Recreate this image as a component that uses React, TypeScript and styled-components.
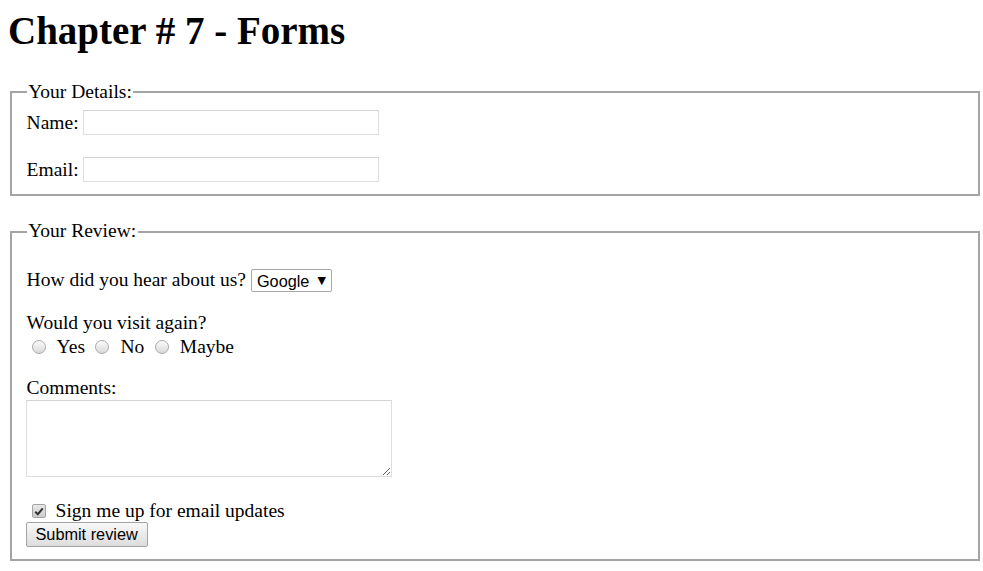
import React from "react";
import styled, { createGlobalStyle } from "styled-components";

const GlobalStyle = createGlobalStyle`
  html, body { margin: 0; padding: 0; background: #ffffff; }
  body {
    font-family: "Liberation Serif", "Times New Roman", serif;
    font-size: 19.5px;
    line-height: 22.4px;
    color: #000000;
  }
  * { box-sizing: border-box; }
`;

const Page = styled.div`
  padding: 8px 3px 12px 10px;
`;

const Title = styled.h1`
  margin: 0 0 27px -2px;
  font-size: 39px;
  line-height: 46px;
  font-weight: bold;
`;

const Fieldset = styled.fieldset<{ $gap?: number }>`
  margin: ${(p) => p.$gap ?? 0}px 0 0 0;
  padding: 6.8px 14.6px 12.2px 14.6px;
  border: 2px solid #a4a4a4;
  min-width: 0;
`;

const Legend = styled.legend`
  padding: 0 1.6px;
  line-height: 22.4px;
`;

const FieldRow = styled.div<{ $top?: number }>`
  display: flex;
  align-items: center;
  height: 25px;
  margin-top: ${(p) => p.$top ?? 0}px;
`;

const FieldLabel = styled.label`
  margin-right: 4px;
`;

const TextInput = styled.input`
  width: 296px;
  height: 25px;
  border: 1px solid #dedede;
  border-top-color: #d4d4d4;
  background: #ffffff;
  padding: 1px 3px;
  font: 16px "Liberation Sans", Arial, sans-serif;
  outline: none;
`;

const Para = styled.div`
  margin-top: 19.5px;
`;

const InlineRow = styled.div<{ $h: number; $shift?: number }>`
  display: flex;
  align-items: center;
  height: ${(p) => p.$h}px;
  padding-top: ${(p) => p.$shift ?? 0}px;
`;

const Line = styled.div`
  height: 22.4px;
`;

const SelectBox = styled.span`
  position: relative;
  display: inline-flex;
  margin-left: 5px;
  height: 23px;
`;

const Select = styled.select`
  appearance: none;
  -webkit-appearance: none;
  width: 81px;
  height: 23px;
  border: 1px solid #a7a7a7;
  border-radius: 2px;
  background: #ffffff;
  color: #000000;
  padding: 0 20px 0 5px;
  font: 16.3px "Liberation Sans", Arial, sans-serif;
  outline: none;
`;

const SelectArrow = styled.span`
  position: absolute;
  right: 6px;
  top: 0;
  height: 23px;
  display: flex;
  align-items: center;
  font: 11px "DejaVu Sans", sans-serif;
  pointer-events: none;
`;

const RadioOption = styled.label`
  display: inline-flex;
  align-items: center;
  margin-right: 5.5px;
`;

const Radio = styled.input`
  appearance: none;
  -webkit-appearance: none;
  width: 14px;
  height: 14px;
  margin: 0 11px 0 5px;
  border-radius: 50%;
  border: 1px solid #a9a9a9;
  background: linear-gradient(#fbfbfb, #d9d9d9);
  box-shadow: inset 0 1px 1px rgba(255, 255, 255, 0.8);
`;

const TextArea = styled.textarea`
  display: block;
  width: 366px;
  height: 77px;
  margin: 0 0 0 -1px;
  border: 1px solid #dedede;
  border-top-color: #d4d4d4;
  font: 16px "Liberation Mono", monospace;
  outline: none;
`;

const CheckRow = styled.label`
  display: flex;
  align-items: center;
  height: 22.4px;
  padding-top: 7px;
`;

const CheckBox = styled.span`
  display: inline-flex;
  align-items: center;
  justify-content: center;
  width: 14px;
  height: 14px;
  margin: 0 10px 0 5px;
  border: 1px solid #a3a3a3;
  border-radius: 2px;
  background: linear-gradient(#e9e9e9, #cdcdcd);
`;

const Button = styled.button`
  display: block;
  margin: 3px 0 0 -1px;
  width: 122px;
  height: 25px;
  padding: 0;
  border: 1px solid #a3a3a3;
  border-radius: 2px;
  background: linear-gradient(#f8f8f8, #dddddd);
  color: #000000;
  font: 16.3px "Liberation Sans", Arial, sans-serif;
`;

export default function App() {
  return (
    <>
      <GlobalStyle />
      <Page>
        <Title>Chapter # 7 - Forms</Title>
        <form onSubmit={(e) => e.preventDefault()}>
          <Fieldset>
            <Legend>Your Details:</Legend>
            <FieldRow>
              <FieldLabel htmlFor="name">Name:</FieldLabel>
              <TextInput id="name" type="text" />
            </FieldRow>
            <FieldRow $top={22}>
              <FieldLabel htmlFor="email">Email:</FieldLabel>
              <TextInput id="email" type="email" />
            </FieldRow>
          </Fieldset>
          <Fieldset $gap={24}>
            <Legend>Your Review:</Legend>
            <Para>
              <InlineRow $h={23}>
                How did you hear about us?
                <SelectBox>
                  <Select defaultValue="google">
                    <option value="google">Google</option>
                    <option value="friend">Friend</option>
                    <option value="other">Other</option>
                  </Select>
                  <SelectArrow>▼</SelectArrow>
                </SelectBox>
              </InlineRow>
            </Para>
            <Para>
              <Line>Would you visit again?</Line>
              <InlineRow $h={24} $shift={3}>
                <RadioOption>
                  <Radio type="radio" name="visit" value="yes" />
                  Yes
                </RadioOption>
                <RadioOption>
                  <Radio type="radio" name="visit" value="no" />
                  No
                </RadioOption>
                <RadioOption>
                  <Radio type="radio" name="visit" value="maybe" />
                  Maybe
                </RadioOption>
              </InlineRow>
            </Para>
            <Para>
              <Line>Comments:</Line>
              <TextArea />
            </Para>
            <Para>
              <CheckRow>
                <CheckBox>
                  <svg width="10" height="9" viewBox="0 0 10 9">
                    <path d="M1.2 4.8 L3.8 7.2 L8.8 1.4" fill="none" stroke="#333333" strokeWidth="2" />
                  </svg>
                </CheckBox>
                Sign me up for email updates
              </CheckRow>
              <Button type="submit">Submit review</Button>
            </Para>
          </Fieldset>
        </form>
      </Page>
    </>
  );
}
